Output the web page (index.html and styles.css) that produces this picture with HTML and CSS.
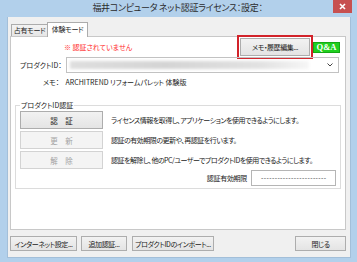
FILE: index.html
```html
<!DOCTYPE html>
<html lang="ja">
  <head>
    <meta charset="UTF-8" />
    <link rel="stylesheet" href="styles.css">
    <title>ネット認証ライセンス：設定</title>
  </head>
  <body>
    <div class="window">
      <div class="titlebar">
        <span class="title">福井コンピュータ ネット認証ライセンス：設定：</span>
        <span class="close">
          <svg width="7" height="7" viewBox="0 0 7 7"><path d="M1 1L6 6M6 1L1 6" stroke="#fff" stroke-width="1.6"/></svg>
        </span>
      </div>

      <div class="client">
        <div class="tabs">
          <div class="tab">占有モード</div>
          <div class="tab active">体験モード</div>
        </div>

        <div class="panel">
          <div class="status-row">
            <span class="warning">※ 認証されていません</span>
            <span class="highlight"><button class="btn memo-btn">メモ・履歴編集...</button></span>
            <span class="qa">Q&amp;A</span>
          </div>

          <div class="product-row">
            <span class="product-label">プロダクトID：</span>
            <div class="combo">
              <div class="combo-value"></div>
              <svg class="combo-arrow" width="6" height="4" viewBox="0 0 6 4"><path d="M0.5 0.5L3 3L5.5 0.5" fill="none" stroke="#444" stroke-width="1"/></svg>
            </div>
          </div>

          <div class="memo-row">
            <span class="memo-label">メモ：</span>
            <span>ARCHITREND リフォームパレット 体験版</span>
          </div>

          <div class="group">
            <span class="legend">プロダクトID認証</span>
            <div class="action-row">
              <button class="btn action-btn">認　証</button>
              <span class="desc">ライセンス情報を取得し、アプリケーションを使用できるようにします。</span>
            </div>
            <div class="action-row">
              <button class="btn action-btn" disabled>更　新</button>
              <span class="desc">認証の有効期限の更新や、再認証を行います。</span>
            </div>
            <div class="action-row">
              <button class="btn action-btn" disabled>解　除</button>
              <span class="desc">認証を解除し、他のPC/ユーザーでプロダクトIDを使用できるようにします。</span>
            </div>
            <div class="expiry-row">
              <span class="expiry-label">認証有効期限</span>
              <span class="expiry-box">------------------------</span>
            </div>
          </div>
        </div>

        <div class="footer">
          <button class="btn foot-btn internet">インターネット設定...</button>
          <button class="btn foot-btn extra">追加認証...</button>
          <button class="btn foot-btn import">プロダクトIDのインポート...</button>
          <button class="btn foot-btn close-btn">閉じる</button>
        </div>
      </div>
    </div>
  </body>
</html>
```

FILE: styles.css
```css
body {
  margin: 0;
  font-family: "Noto Sans CJK JP", sans-serif;
  font-feature-settings: "palt";
  font-size: 7px;
  letter-spacing: -0.3px;
  white-space: nowrap;
  color: #1a1a1a;
}

.window {
  width: 357px;
  height: 262px;
  box-sizing: border-box;
  background-color: #b2d0eb;
  display: flex;
  flex-direction: column;
}

.titlebar {
  height: 17px;
  display: flex;
  align-items: flex-start;
}

.title {
  flex: 1;
  padding-left: 22px;
  text-align: center;
  font-size: 9px;
  letter-spacing: -0.3px;
  line-height: 16px;
  color: #2b2b2b;
}

.close {
  width: 19px;
  height: 13px;
  margin-right: 5px;
  background-color: #c75050;
  display: flex;
  align-items: center;
  justify-content: center;
}

.client {
  flex: 1;
  margin: 0 6px 4px 7px;
  padding: 0 4px 0 2px;
  background-color: #f0f0f0;
  border: 1px solid #a3bfd9;
  border-top: none;
  display: flex;
  flex-direction: column;
}

/* tabs */
.tabs {
  height: 19px;
  display: flex;
  align-items: flex-end;
  padding-left: 1px;
}

.tab {
  height: 12px;
  width: 37px;
  box-sizing: border-box;
  border: 1px solid #acacac;
  border-bottom: none;
  background: linear-gradient(#f3f3f3, #e6e6e6);
  text-align: center;
  line-height: 11px;
}

.tab.active {
  height: 15px;
  width: 41px;
  margin-left: -1px;
  margin-bottom: -1px;
  background: #fff;
  position: relative;
  line-height: 13px;
}

.panel {
  flex: 1;
  background-color: #fff;
  border: 1px solid #c8c8c8;
  padding-top: 1px;
  display: flex;
  flex-direction: column;
}

/* buttons */
.btn {
  font-family: inherit;
  font-feature-settings: "palt";
  font-size: 7px;
  letter-spacing: -0.4px;
  white-space: nowrap;
  color: #1a1a1a;
  margin: 0;
  padding: 0;
  box-sizing: border-box;
  border: 1px solid #adadad;
  background: linear-gradient(#f2f2f2, #e4e4e4);
}

.btn:disabled {
  color: #a3a3a3;
  border-color: #d3d3d3;
  background: #f4f4f4;
}

.status-row {
  height: 18px;
  display: flex;
  align-items: center;
  padding-right: 5px;
}

.warning {
  margin-left: 53px;
  color: #ff2b2b;
  letter-spacing: 0;
}

.highlight {
  margin-left: auto;
  display: flex;
  outline: 2px solid #d2232a;
  outline-offset: 1px;
}

.memo-btn {
  width: 70px;
  height: 18px;
}

.qa {
  margin-left: 3px;
  width: 27px;
  height: 11px;
  box-sizing: border-box;
  background-color: #20d020;
  border: 1px solid #14a814;
  color: #fff;
  font-family: "Liberation Serif", serif;
  font-weight: bold;
  font-size: 8.5px;
  letter-spacing: 0;
  line-height: 9px;
  text-align: center;
}

.product-row {
  margin-top: 1px;
  height: 16px;
  display: flex;
  align-items: center;
  padding: 0 6px 0 9px;
}

.product-label {
  width: 46px;
  letter-spacing: 0;
}

.combo {
  flex: 1;
  height: 16px;
  box-sizing: border-box;
  border: 1px solid #c2c2c2;
  display: flex;
  align-items: center;
  padding: 0 5px 0 3px;
}

.combo-value {
  flex: 1;
  height: 8px;
  margin-right: 18px;
  background: linear-gradient(90deg, #dedede, #d4d4d4 40%, #e2e2e2 80%, #f6f6f6);
  filter: blur(1.5px);
}

.memo-row {
  margin-top: 3px;
  height: 12px;
  line-height: 12px;
  padding-left: 32px;
  letter-spacing: 0;
}

.memo-label {
  display: inline-block;
  width: 21px;
}

/* product id group */
.group {
  margin: 17px 4px 0 4px;
  border: 1px solid #dcdcdc;
  padding: 0 4px 2px 4px;
}

.legend {
  display: block;
  width: fit-content;
  margin: -6px 0 0 0;
  padding: 0 1px;
  background-color: #fff;
  line-height: 10px;
  height: 10px;
  letter-spacing: 0;
}

.action-row {
  margin-top: 2px;
  height: 18px;
  display: flex;
  align-items: center;
}

.action-row:first-of-type {
  margin-top: 1px;
}

.action-btn {
  width: 83px;
  height: 18px;
  font-size: 7.5px;
  letter-spacing: 0;
}

.desc {
  margin-left: 8px;
  letter-spacing: -0.5px;
}

.expiry-row {
  margin-top: 1px;
  height: 16px;
  display: flex;
  align-items: center;
  justify-content: flex-end;
}

.expiry-label {
  margin-right: 4px;
}

.expiry-box {
  width: 85px;
  height: 16px;
  box-sizing: border-box;
  border: 1px solid #b5b5b5;
  padding-left: 9px;
  font-family: "Liberation Sans", sans-serif;
  line-height: 13px;
  color: #555;
  letter-spacing: 0.4px;
}

/* footer buttons */
.footer {
  height: 27px;
  display: flex;
  align-items: flex-start;
  padding-top: 6px;
  box-sizing: border-box;
}

.foot-btn {
  height: 15px;
}

.internet {
  width: 67px;
}

.extra {
  width: 46px;
  margin-left: 4px;
}

.import {
  width: 82px;
  margin-left: 5px;
}

.close-btn {
  width: 51px;
  margin-left: auto;
}
```
